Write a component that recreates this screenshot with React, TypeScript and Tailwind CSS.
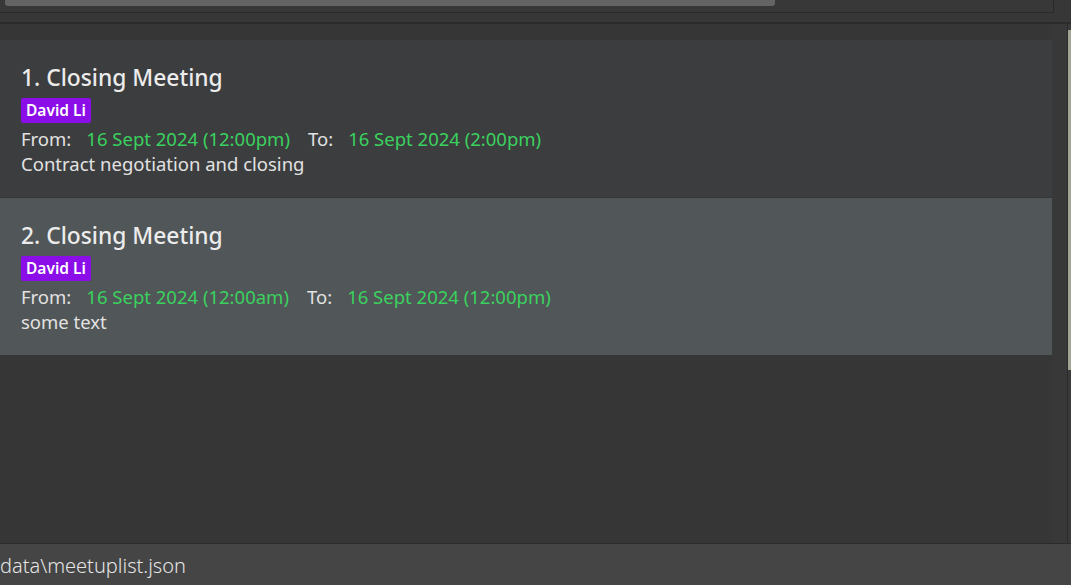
import React from 'react';

type Meetup = {
  title: string;
  person: string;
  from: string;
  to: string;
  info: string;
};

const meetups: Meetup[] = [
  {
    title: 'Closing Meeting',
    person: 'David Li',
    from: '16 Sept 2024 (12:00pm)',
    to: '16 Sept 2024 (2:00pm)',
    info: 'Contract negotiation and closing',
  },
  {
    title: 'Closing Meeting',
    person: 'David Li',
    from: '16 Sept 2024 (12:00am)',
    to: '16 Sept 2024 (12:00pm)',
    info: 'some text',
  },
];

function MeetupCard({ m, index }: { m: Meetup; index: number }) {
  const bg = index % 2 === 0 ? 'bg-[#3c3d3f]' : 'bg-[#515658]';
  return (
    <div className={`${bg} h-[157px] pl-[21px] pt-[23px]`}>
      <div className="text-[22.8px] leading-[29px] font-medium text-[#ececec]">
        {index + 1}. {m.title}
      </div>
      <div className="mt-[6px] flex">
        <span className="bg-[#8b0ee8] text-white font-semibold text-[15.5px] leading-[25px] px-[5px] rounded-[2px]">
          {m.person}
        </span>
      </div>
      <div className="mt-[2px] text-[18.5px] leading-[27px] text-[#e2e2e2] flex">
        <span>From:</span>
        <span className="ml-[15px] text-[#3ad25e]">{m.from}</span>
        <span className="ml-[18px]">To:</span>
        <span className="ml-[15px] text-[#3ad25e]">{m.to}</span>
      </div>
      <div className="text-[18.5px] leading-[24px] text-[#e2e2e2]">{m.info}</div>
    </div>
  );
}

export default function App() {
  return (
    <div
      className="w-[1071px] h-[585px] overflow-hidden bg-[#373737] flex flex-col"
      style={{ fontFamily: '"Noto Sans", "Open Sans", sans-serif' }}
    >
      {/* top result panel remnant */}
      <div className="flex h-[24px] border-b-2 border-[#2b2b2b]">
        <div className="flex-1 flex flex-col">
          <div className="w-[1054px] h-[13px] border-b border-r border-[#2a2a2a] bg-[#383838] pl-[5px]">
            <div className="w-[770px] h-[6px] bg-[#646464] rounded-b-[3px]" />
          </div>
        </div>
      </div>

      <div className="flex flex-1">
        <div className="w-[1052px] bg-[#363636] pt-[16px] flex flex-col gap-[1px]">
          {meetups.map((m, i) => (
            <MeetupCard key={i} m={m} index={i} />
          ))}
        </div>
        <div className="w-[15px] bg-[#383838]" />
        <div className="w-[1px] bg-[#2c2c2c]" />
        <div className="flex-1 flex flex-col">
          <div className="h-[6px] bg-[#3a3a3a]" />
          <div className="h-[340px] bg-[#a1a694]" />
          <div className="flex-1 bg-[#3a3a3a]" />
        </div>
      </div>

      <div className="h-[42px] border-t border-[#2b2b2b] bg-[#454545] flex items-center">
        <span className="text-[20px] text-[#e4e4e4] font-light pt-[2px]">data\meetuplist.json</span>
      </div>
    </div>
  );
}
